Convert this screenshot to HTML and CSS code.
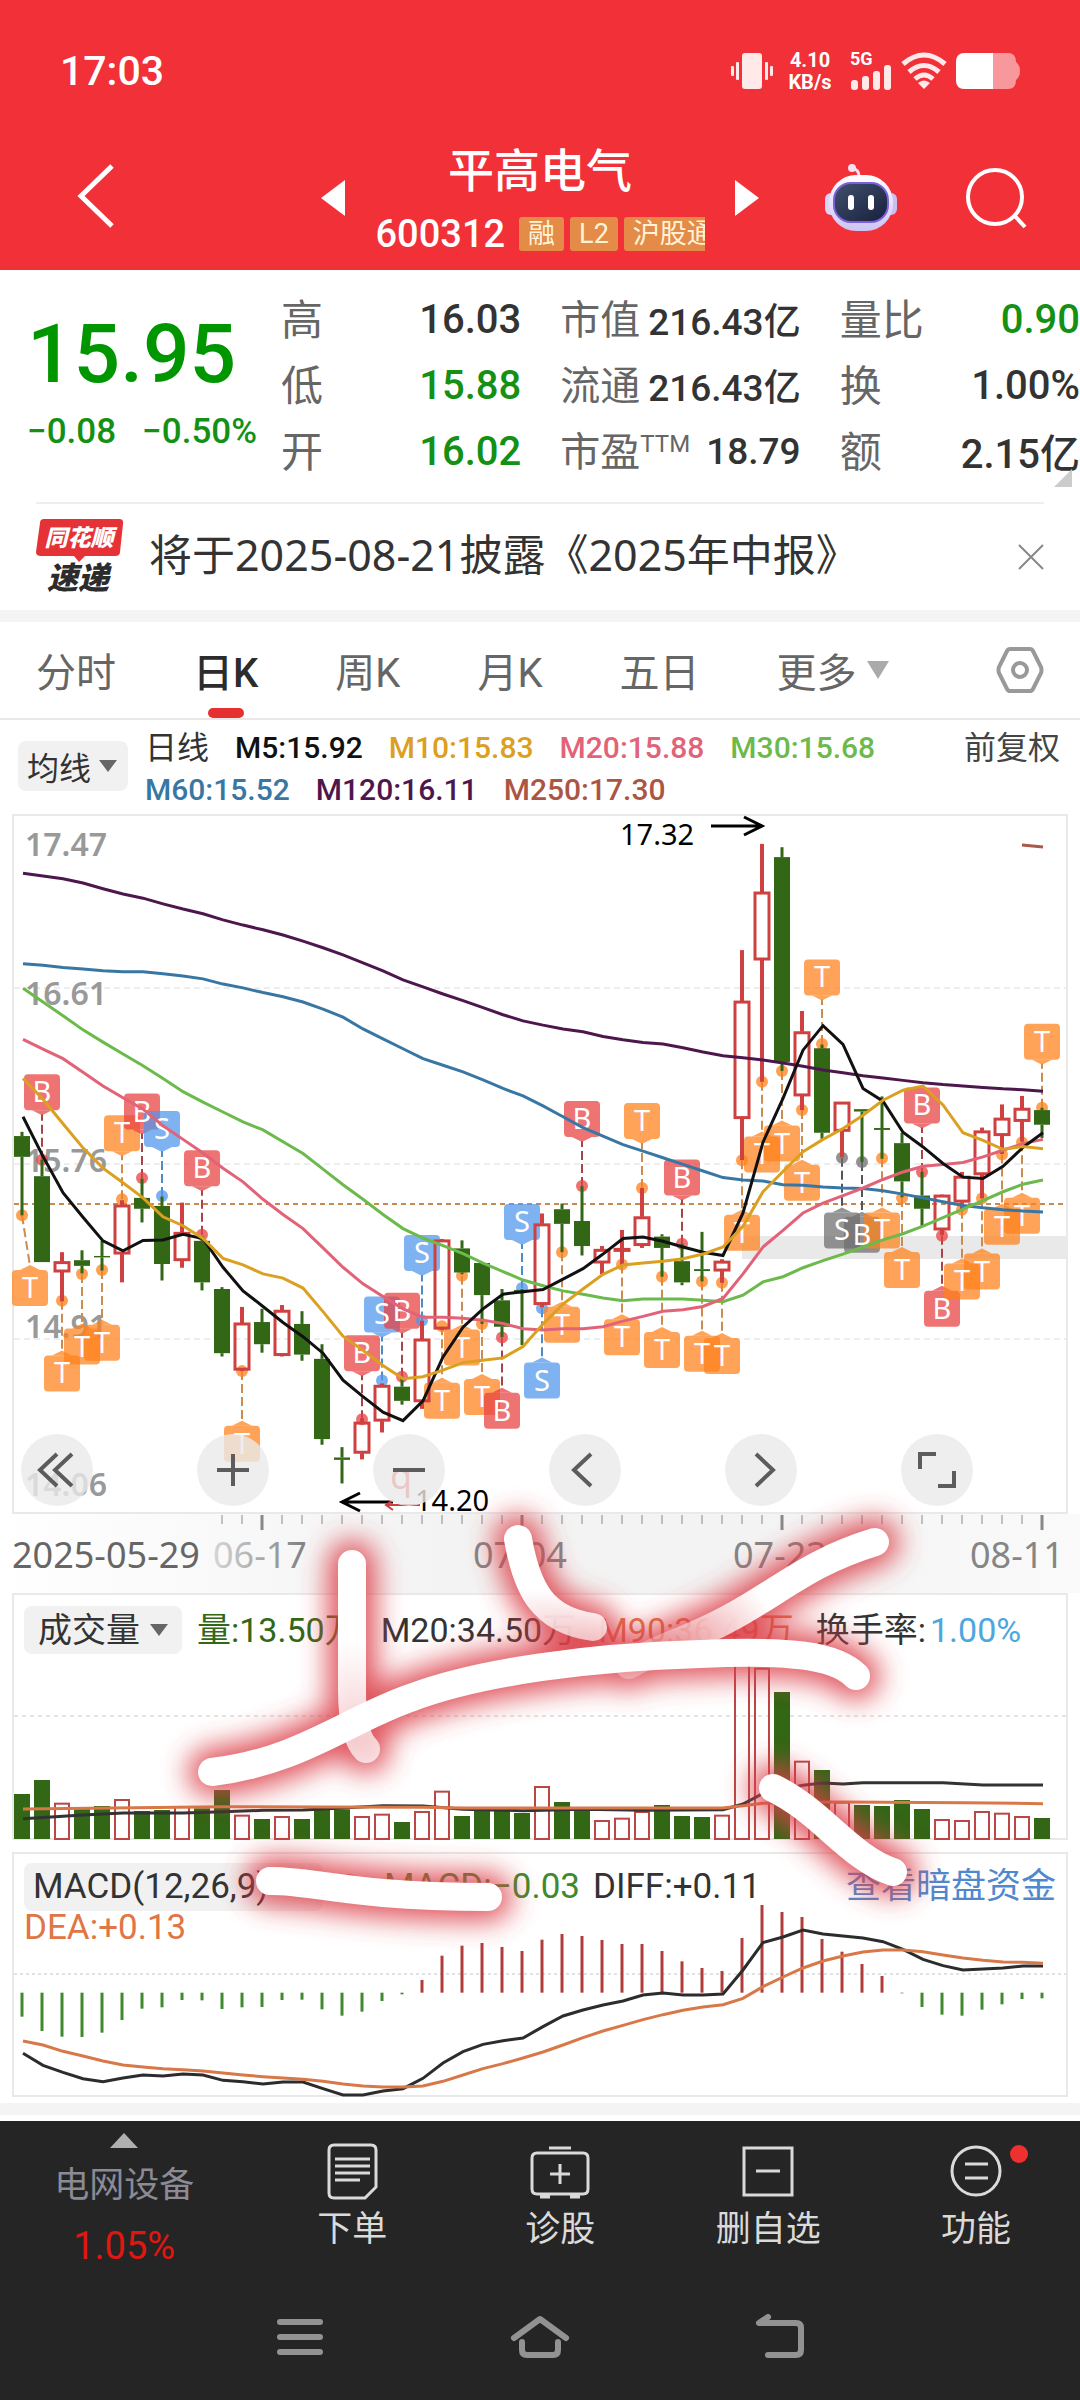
FILE: index.html
```html
<!DOCTYPE html>
<html lang="zh-CN">
<head>
<meta charset="utf-8">
<meta name="viewport" content="width=device-width">
<title>平高电气 600312</title>
<link rel="stylesheet" href="styles.css">
</head>
<body>
<header class="header">
  <div class="status">
    <span class="clock">17:03</span>
    <svg class="status-vibrate" width="42" height="38" viewBox="0 0 42 38" fill="#ffe9e9"><rect x="11" y="1" width="20" height="36" rx="3"/><rect x="5" y="10" width="3" height="18" rx="1"/><rect x="0" y="14" width="3" height="10" rx="1"/><rect x="34" y="10" width="3" height="18" rx="1"/><rect x="39" y="14" width="3" height="10" rx="1"/></svg>
    <span class="speed">4.10<br>KB/s</span>
    <span class="signal"><b>5G</b><svg width="42" height="26" viewBox="0 0 42 26" fill="#ffe9e9"><rect x="1" y="16" width="7" height="10" rx="3"/><rect x="12" y="12" width="7" height="14" rx="3"/><rect x="23" y="7" width="7" height="19" rx="3"/><rect x="34" y="1" width="7" height="25" rx="3"/></svg></span>
    <svg class="wifi" width="46" height="38" viewBox="0 0 46 38" fill="none" stroke="#ffe9e9" stroke-width="5"><path d="M2 12Q23 -6 44 12M8 20Q23 7 38 20M14 27Q23 19 32 27"/><path d="M17 31Q23 26 29 31L23 37Z" fill="#ffe9e9" stroke="none"/></svg>
    <svg class="battery" width="64" height="36" viewBox="0 0 64 36"><path d="M9 0H52Q60 0 60 9Q64 12 64 18T60 27Q60 36 52 36H9Q0 36 0 27V9Q0 0 9 0Z" fill="#f9989c"/><path d="M9 0H37V36H9Q0 36 0 27V9Q0 0 9 0Z" fill="#fff"/></svg>
  </div>
  <div class="titlebar">
    <button class="back" aria-label="返回"><svg width="38" height="64" viewBox="0 0 38 64" fill="none" stroke="#fff" stroke-width="5"><path d="M35 2L4 32L35 62"/></svg></button>
    <button class="step" aria-label="上一只"><svg width="24" height="36" viewBox="0 0 24 36"><path d="M24 0V36L0 18Z" fill="#fff"/></svg></button>
    <div class="title">
      <h1>平高电气</h1>
      <div class="code"><span class="code-num">600312</span><span class="tag">融</span><span class="tag">L2</span><span class="tag">沪股通</span></div>
    </div>
    <button class="step" aria-label="下一只"><svg width="24" height="36" viewBox="0 0 24 36"><path d="M0 0V36L24 18Z" fill="#fff"/></svg></button>
    <button class="robot" aria-label="智能助手"><svg width="72" height="68" viewBox="0 0 72 68"><defs><linearGradient id="shell" x1="0" y1="0" x2="0" y2="1"><stop offset="0" stop-color="#fff"/><stop offset="1" stop-color="#cdc3f3"/></linearGradient><linearGradient id="face" x1="0" y1="0" x2="1" y2="1"><stop offset="0" stop-color="#41516d"/><stop offset="1" stop-color="#171f3c"/></linearGradient></defs><path d="M34 12Q34 5 26 4" fill="none" stroke="#f6dff0" stroke-width="3"/><circle cx="27" cy="4" r="4" fill="#f6dff0"/><rect x="0" y="29" width="12" height="22" rx="6" fill="#dcd4f8"/><rect x="60" y="29" width="12" height="22" rx="6" fill="#c9bff0"/><rect x="4" y="11" width="64" height="56" rx="27" fill="url(#shell)"/><rect x="9" y="19" width="54" height="39" rx="17" fill="url(#face)" stroke="#7a5fdc" stroke-width="2"/><rect x="23" y="31" width="6" height="15" rx="3" fill="#fff"/><rect x="43" y="31" width="6" height="15" rx="3" fill="#fff"/></svg></button>
    <button class="search" aria-label="搜索"><svg width="62" height="62" viewBox="0 0 62 62" fill="none" stroke="#fff" stroke-width="4"><circle cx="30" cy="29" r="27"/><path d="M49 47L60 59"/></svg></button>
  </div>
</header>

<main>
<section class="quote">
  <div class="last">
    <div class="price">15.95</div>
    <div class="change"><span>−0.08</span><span>−0.50%</span></div>
  </div>
  <dl class="facts">
    <div class="f-a"><dt>高</dt><dd>16.03</dd></div>
    <div class="f-b"><dt>市值</dt><dd>216.43亿</dd></div>
    <div class="f-c"><dt>量比</dt><dd class="down">0.90</dd></div>
    <div class="f-a"><dt>低</dt><dd class="down">15.88</dd></div>
    <div class="f-b"><dt>流通</dt><dd>216.43亿</dd></div>
    <div class="f-c"><dt>换</dt><dd>1.00%</dd></div>
    <div class="f-a"><dt>开</dt><dd class="down">16.02</dd></div>
    <div class="f-b"><dt>市盈<sup>TTM</sup></dt><dd>18.79</dd></div>
    <div class="f-c"><dt>额</dt><dd>2.15亿</dd></div>
  </dl>
  <svg class="corner" width="18" height="18" viewBox="0 0 18 18"><path d="M18 0V18H0Z" fill="#ccc"/></svg>
</section>

<section class="news">
  <svg class="badge" width="88" height="76" viewBox="0 0 88 76"><path d="M8 0H83Q88 0 87 5L84 33Q84 37 79 37H49L43 43L38 37H5Q0 37 0 33L4 4Q4 0 8 0Z" fill="#e43236"/><text x="43" y="27" class="badge-top">同花顺</text><text x="42" y="70" class="badge-bottom">速递</text></svg>
  <a class="news-text" href="#">将于2025-08-21披露《2025年中报》</a>
  <button class="close" aria-label="关闭"><svg width="26" height="26" viewBox="0 0 26 26" stroke="#888" stroke-width="2"><path d="M1 1L25 25M25 1L1 25"/></svg></button>
</section>

<nav class="tabs">
  <button>分时</button><button class="active">日K</button><button>周K</button><button>月K</button><button>五日</button>
  <button class="more">更多<svg width="22" height="18" viewBox="0 0 22 18"><path d="M0 0H22L11 18Z" fill="#aaa"/></svg></button>
  <button class="gear" aria-label="设置"><svg width="48" height="46" viewBox="0 0 48 46" fill="none" stroke="#999" stroke-width="4"><path d="M14 2H34Q36 2 37 4L45 20Q46 23 45 26L37 42Q36 44 34 44H14Q12 44 11 42L3 26Q2 23 3 20L11 4Q12 2 14 2Z"/><circle cx="24" cy="23" r="7"/></svg></button>
</nav>

<section class="ma">
  <button class="picker">均线<svg width="18" height="12" viewBox="0 0 18 12"><path d="M0 0H18L9 12Z" fill="#666"/></svg></button>
  <div class="ma-list">
    <div class="ma-row"><span class="period">日线</span><span class="m5">M5:15.92</span><span class="m10">M10:15.83</span><span class="m20">M20:15.88</span><span class="m30">M30:15.68</span></div>
    <div class="ma-row"><span class="m60">M60:15.52</span><span class="m120">M120:16.11</span><span class="m250">M250:17.30</span></div>
  </div>
  <button class="adjust">前复权</button>
</section>

<section class="charts">
  <div class="panels">
    <div class="panel">
      <svg id="price" viewBox="0 814 1080 700"></svg>
      <div class="controls">
        <button aria-label="最早"><svg viewBox="0 0 72 72"><path d="M36 20L19 36L36 52M51 20L34 36L51 52"/></svg></button>
        <button aria-label="放大"><svg viewBox="0 0 72 72"><path d="M20 36H52M36 20V52"/></svg></button>
        <button aria-label="缩小"><svg viewBox="0 0 72 72"><path d="M20 36H52"/></svg></button>
        <button aria-label="左移"><svg viewBox="0 0 72 72"><path d="M42 20L25 36L42 52"/></svg></button>
        <button aria-label="右移"><svg viewBox="0 0 72 72"><path d="M31 20L48 36L31 52"/></svg></button>
        <button aria-label="全屏"><svg viewBox="0 0 72 72"><path d="M19 35V20H35M37 52H53V37"/></svg></button>
      </div>
    </div>
    <svg id="axis" class="axis" viewBox="0 1514 1080 79"></svg>
    <div class="panel volume">
      <svg id="volume" viewBox="0 1593 1080 250"></svg>
      <div class="legend">
        <button class="picker">成交量<svg width="18" height="12" viewBox="0 0 18 12"><path d="M0 0H18L9 12Z" fill="#666"/></svg></button>
        <span class="vol-now">量:13.50万</span><span>M20:34.50万</span><span class="orange">M90:36.49万</span><span>换手率:<span class="turnover">1.00%</span></span>
      </div>
    </div>
    <div class="panel macd">
      <svg id="macd" viewBox="0 1852 1080 246"></svg>
      <div class="legend">
        <button class="picker wide">MACD(12,26,9)<svg width="18" height="12" viewBox="0 0 18 12"><path d="M0 0H18L9 12Z" fill="#666"/></svg></button>
        <svg class="help" width="26" height="26" viewBox="0 0 26 26" fill="none" stroke="#b9a9a9" stroke-width="2"><circle cx="13" cy="13" r="12"/></svg>
        <span class="hist">MACD:−0.03</span><span>DIFF:+0.11</span><a class="dark-pool" href="#">查看暗盘资金</a>
        <span class="orange dea">DEA:+0.13</span>
      </div>
    </div>
  </div>
  <svg class="ink" viewBox="0 814 1080 1284" fill="none" stroke-linecap="round" aria-hidden="true">
    <defs>
      <filter id="glow" filterUnits="userSpaceOnUse" x="0" y="1400" width="1080" height="660"><feGaussianBlur stdDeviation="14"/></filter>
      <linearGradient id="fadeDown" gradientUnits="userSpaceOnUse" x1="0" y1="1640" x2="0" y2="1740"><stop offset="0" stop-color="#fff"/><stop offset="1" stop-color="#fff" stop-opacity=".7"/></linearGradient>
      <linearGradient id="fadeHook" gradientUnits="userSpaceOnUse" x1="0" y1="1590" x2="0" y2="1645"><stop offset="0" stop-color="#fff"/><stop offset="1" stop-color="#fff" stop-opacity=".6"/></linearGradient>
      <linearGradient id="fadeLeft" gradientUnits="userSpaceOnUse" x1="760" y1="1595" x2="670" y2="1655"><stop offset="0" stop-color="#fff"/><stop offset="1" stop-color="#fff" stop-opacity=".3"/></linearGradient>
    </defs>
    <g class="ink-glow" filter="url(#glow)">
      <path d="M352 1564V1690Q352 1735 366 1749"/><path d="M518 1539C527 1590 543 1620 593 1627"/><path d="M875 1542C790 1568 770 1606 678 1642Q640 1658 629 1665"/><path d="M773 1788C820 1810 850 1858 893 1872"/><path d="M270 1881C310 1880 350 1897 488 1897"/><path d="M212 1772C300 1762 350 1718 413 1697C480 1672 590 1657 700 1654C790 1650 835 1655 856 1676"/>
    </g>
    <g stroke-width="28">
      <path d="M352 1564V1690Q352 1735 366 1749" stroke="url(#fadeDown)"/>
      <path d="M518 1539C527 1590 543 1620 593 1627" stroke="url(#fadeHook)"/>
      <path d="M875 1542C790 1568 770 1606 678 1642Q640 1658 629 1665" stroke="url(#fadeLeft)"/>
      <path d="M773 1788C820 1810 850 1858 893 1872M270 1881C310 1880 350 1897 488 1897M212 1772C300 1762 350 1718 413 1697C480 1672 590 1657 700 1654C790 1650 835 1655 856 1676" stroke="#fff"/>
    </g>
  </svg>
</section>
</main>

<footer class="footer">
  <nav class="actions">
    <button class="sector"><svg width="28" height="15" viewBox="0 0 28 15"><path d="M14 0L28 15H0Z" fill="#b0b0b0"/></svg><span class="sector-name">电网设备</span><span class="sector-rate">1.05%</span></button>
    <button><svg width="60" height="60" viewBox="0 0 60 60"><path d="M12 4H49Q54 4 54 9V46L43 57H12Q7 57 7 52V9Q7 4 12 4Z"/><path d="M13 18H48M13 25H48M13 32H48M13 39H38"/></svg><span>下单</span></button>
    <button><svg width="60" height="60" viewBox="0 0 60 60"><path d="M19 7H41M7 12H53Q58 12 58 17V48Q58 53 53 53H7Q2 53 2 48V17Q2 12 7 12ZM20 33H40M30 23V43M10 56H20M40 56H50"/></svg><span>诊股</span></button>
    <button><svg width="60" height="60" viewBox="0 0 60 60"><path d="M6 7H54V54H6ZM18 30H42"/></svg><span>删自选</span></button>
    <button class="func"><svg width="60" height="60" viewBox="0 0 60 60"><circle cx="30" cy="30" r="24"/><path d="M19 23H42M19 37H42"/></svg><i class="dot"></i><span>功能</span></button>
  </nav>
  <nav class="system">
    <button aria-label="最近任务"><svg width="60" height="48" viewBox="0 0 60 48"><path d="M10 8H50M10 23H50M10 38H50"/></svg></button>
    <button aria-label="主屏幕"><svg width="60" height="48" viewBox="0 0 60 48"><path d="M4 24L30 5L56 24M12 28V36Q12 41 17 41H43Q48 41 48 36V28"/></svg></button>
    <button aria-label="返回上一级"><svg width="60" height="48" viewBox="0 0 60 48"><path d="M18 3L9 9H46Q51 9 51 14V36Q51 41 46 41H18"/></svg></button>
  </nav>
</footer>
<script src="chart.js"></script>
</body>
</html>
```
FILE: styles.css
```css
* { box-sizing: border-box; }
body { margin: 0; background: #fff; color: #333; font-family: Roboto, "Noto Sans CJK SC", sans-serif; overflow-x: hidden; }
button { padding: 0; border: 0; background: none; color: inherit; font: inherit; white-space: nowrap; }
a { color: inherit; text-decoration: none; }
svg { display: block; flex: none; }
h1, dl, dd { margin: 0; }

.header { background: #f13038; color: #fff; }
.status { display: flex; align-items: center; height: 142px; padding: 0 60px; }
.clock { font-size: 41px; font-weight: 500; flex: 1; }
.speed { margin-left: 13px; width: 48px; font-size: 20px; line-height: 22px; font-weight: 700; text-align: center; }
.signal { margin-left: 16px; font-size: 18px; line-height: 14px; }
.signal b { display: block; height: 12px; }
.wifi { margin-left: 9px; }
.battery { margin-left: 9px; }
.titlebar { display: flex; height: 128px; padding: 22px 53px 0 77px; align-items: flex-start; }
.back { flex: none; width: 244px; }
.step { margin-top: 16px; }
.title { flex: 1; margin-top: -22px; display: flex; flex-direction: column; align-items: center; gap: 12px; }
.title h1 { font-size: 46px; line-height: 58px; font-weight: 500; }
.code { display: flex; align-items: center; width: 329px; height: 44px; overflow: hidden; }
.code-num { font-size: 38px; font-weight: 500; margin-right: 8px; }
.tag { flex: none; margin-left: 6px; padding: 0 9px; height: 34px; line-height: 34px; font-size: 27px; background: #e48b48; color: #fff3d8; border-radius: 3px; }
.robot { margin-left: 66px; }
.search { margin-left: 68px; margin-top: 4px; }

.quote { position: relative; display: flex; height: 232px; }
.last { flex: none; width: 281px; padding: 36px 0 0 27px; color: #009600; font-weight: 500; }
.price { font-size: 82px; line-height: 96px; }
.change { display: flex; gap: 26px; margin-top: 8px; font-size: 35px; line-height: 44px; color: #149014; }
.facts { flex: 1; display: grid; grid-template-columns: repeat(3, minmax(0, 1fr)); column-gap: 39px; grid-auto-rows: 66px; padding-top: 16px; }
.facts div { display: flex; justify-content: space-between; align-items: center; white-space: nowrap; }
.facts dt { padding-bottom: 5px; color: #666; font-size: 42px; }
.facts dd { font-size: 40px; font-weight: 500; }
.facts .f-b dt { font-size: 40px; }
.facts .f-b dd { font-size: 37px; }
.facts sup { font-size: 24px; line-height: 24px; vertical-align: 14px; }
.facts .down { color: #149014; }
.corner { position: absolute; right: 8px; bottom: 15px; }

.news { display: flex; align-items: center; height: 108px; margin: 0 36px; border-top: 2px solid #eee; }
.badge-top, .badge-bottom { font-weight: 900; font-style: italic; text-anchor: middle; }
.badge-top { font-size: 23px; fill: #fff; }
.badge-bottom { font-size: 31px; fill: #2c2c2c; }
.news-text { flex: 1; margin-left: 25px; padding-bottom: 5px; font-family: "Noto Sans", "Noto Sans CJK SC", sans-serif; font-size: 43px; line-height: 60px; }

.tabs { display: flex; gap: 77px; height: 110px; padding: 0 36px; border-top: 12px solid #f4f4f4; border-bottom: 2px solid #e8e8e8; font-size: 40px; color: #666; }
.tabs .active { position: relative; color: #2c2c2c; font-weight: 500; }
.tabs .active::after { content: ""; position: absolute; left: 50%; bottom: 0; width: 36px; height: 10px; margin-left: -18px; border-radius: 5px; background: #e6302f; }
.tabs .more { display: flex; align-items: center; gap: 10px; }
.tabs .gear { margin-left: auto; }

.ma { display: flex; align-items: flex-start; height: 94px; padding: 7px 20px 0 18px; font-size: 30px; font-weight: 500; }
.picker { display: flex; align-items: center; justify-content: center; gap: 8px; height: 50px; padding: 0 11px 0 9px; border-radius: 8px; background: #f1f1f1; color: #333; font-size: 32px; font-weight: 400; }
.ma .picker { margin-top: 14px; }
.ma-list { flex: 1; margin-left: 17px; line-height: 42px; }
.ma-row { display: flex; gap: 26px; height: 42px; }
.period, .adjust { font-size: 32px; font-weight: 400; }
.adjust { line-height: 42px; color: #444; }
.m5 { color: #111; }
.m10 { color: #dba020; }
.m20 { color: #e26378; }
.m30 { color: #6bba4b; }
.m60 { color: #3877a4; }
.m120 { color: #4d174e; }
.m250 { color: #ab5543; }

.charts, .panel { display: grid; grid-template-columns: minmax(0, 1fr); }
.charts > *, .panel > * { grid-area: 1 / 1; }
.panel > svg, .axis, .ink { width: 100%; height: auto; }
.ink { pointer-events: none; }
.ink-glow { stroke: #dc4048; stroke-width: 48px; opacity: .9; }
.controls { align-self: end; display: flex; justify-content: space-between; padding: 0 107px 8px 21px; }
.controls button { width: 72px; height: 72px; border-radius: 50%; background: rgba(234, 234, 234, .8); }
.controls path { fill: none; stroke: #5c5c5c; stroke-width: 4px; }
.axis { background: linear-gradient(90deg, #fff, #f3f3f3 40%, #f3f3f3 70%, #fafafa); }
.legend { align-self: start; display: flex; align-items: center; gap: 0 22px; padding: 13px 24px 0; font-size: 34px; line-height: 34px; white-space: nowrap; }
.legend .picker { height: 48px; padding: 0 14px; font-size: 34px; gap: 10px; }
.volume .legend .picker { margin-right: -7px; }
.macd { margin-top: 9px; }
.macd .legend { flex-wrap: wrap; gap: 0 13px; padding: 11px 24px 0; font-size: 35px; }
.macd .legend .wide { width: 299px; padding-left: 9px; justify-content: flex-start; font-size: 35px; }
.hist { margin-left: 9px; color: #3f8a2e; }
.vol-now { color: #316815; }
.orange { color: #e07545; }
.turnover { margin-left: 4px; color: #4ea6de; }
.dark-pool { margin-left: auto; color: #4f88cd; }
.dea { flex-basis: 100%; }

.footer { margin-top: 5px; border-top: 12px solid #f4f4f4; }
.actions { display: flex; height: 165px; border-top: 6px solid #fff; background: #252525; color: #dadada; font-size: 35px; line-height: 44px; }
.actions button { flex: 1; display: flex; flex-direction: column; align-items: center; padding-top: 20px; gap: 7px; }
.actions svg { fill: none; stroke: #dadada; stroke-width: 3px; }
.actions .sector { flex: 0 0 23%; padding-top: 12px; gap: 16px; }
.sector svg { stroke: none; }
.sector-name { color: #8b8b95; }
.sector-rate { font-size: 38px; font-weight: 400; color: #e01710; }
.func { position: relative; }
.dot { position: absolute; left: 50%; top: 24px; width: 18px; height: 18px; margin-left: 34px; border-radius: 50%; background: #ee3030; }
.system { display: flex; justify-content: center; gap: 180px; height: 120px; padding-top: 34px; align-items: flex-start; background: #252525; }
.system svg { fill: none; stroke: #929292; stroke-width: 6px; stroke-linecap: round; stroke-linejoin: round; }

.axis-price { font: 600 32px "Noto Sans", sans-serif; fill: #999; }
.extreme { font: 400 29px "Noto Sans", sans-serif; fill: #000; }
.date { font: 400 36px "Noto Sans", sans-serif; fill: #858585; }
.mark { font: 400 29px "Noto Sans", sans-serif; fill: #fff; text-anchor: middle; }
.event { font: 400 36px "Noto Sans", sans-serif; fill: #e0453f; }
```
FILE: chart.js
```js
const STEP = 20, FIRST = 22;
const RED = '#cf4040', GREEN = '#316715';
const X = i => FIRST + i * STEP;
const Y = v => 800 + v * 0.472;

// [colour, high, body top, body bottom, low]
const candles = [
  'g,703,712,756,880','g,762,797,979,979','r,958,978,1000,1062','g,954,975,987,1003','g,934,966,969,997','r,848,858,962,1022','g,802,843,866,895','g,840,860,983,1018','r,853,916,976,991','g,924,934,1022,1039',
  'g,1032,1036,1172,1179','r,1074,1108,1208,1210','g,1078,1106,1153,1171','r,1070,1081,1177,1179','g,1083,1110,1175,1188','g,1153,1184,1354,1366','g,1371,1393,1398,1448','r,1310,1318,1384,1397','r,1236,1240,1316,1340','g,1222,1243,1273,1281',
  'r,1103,1142,1275,1290','r,930,932,1121,1123','g,933,950,1001,1005','g,981,981,1049,1110','g,1036,1060,1116,1138','g,1036,1038,1042,1155','r,876,898,1069,1075','g,855,867,898,958','g,818,892,945,965','r,945,952,981,1005',
  'r,911,950,953,985','r,822,883,944,949','g,920,925,949,1010','g,940,977,1022,1028','g,915,994,998,1020','r,973,977,998,1023','r,318,426,675,763','r,93,195,339,597','g,100,121,555,574','r,447,491,627,657',
  'g,518,526,705,718','r,640,640,702,757','g,655,655,660,767','g,628,695,699,760','g,705,727,808,842','g,788,838,866,905','r,836,837,911,922','r,788,797,852,868','r,694,701,794,844','r,645,674,711,750',
  'r,627,653,681,724','g,652,657,688,716'
].map(s => s.split(',').map((v, k) => k ? +v : v));

const averages = {
  '#4d174e': [155,161,167,176,188,199,208,220,231,241,254,265,275,286,299,313,328,345,362,381,396,411,425,440,455,468,477,485,491,501,508,514,517,525,534,542,546,551,557,564,572,578,584,589,594,599,603,606,609,612,614,617],
  '#3877a4': [347,350,355,358,362,364,364,368,373,379,390,398,408,417,428,443,460,485,506,527,548,562,576,593,611,627,648,671,694,712,730,744,758,772,786,800,805,807,815,816,820,822,823,828,835,843,851,859,864,868,871,873],
  '#6bba4b': [399,428,457,487,513,538,563,590,618,640,661,682,699,724,749,782,815,846,878,908,928,944,961,981,999,1017,1029,1040,1047,1055,1061,1057,1057,1057,1060,1063,1049,1021,1010,991,976,962,947,932,919,903,885,867,849,830,814,805],
  '#e26378': [507,528,548,577,606,631,655,690,719,748,780,809,846,878,908,949,990,1025,1052,1078,1096,1096,1098,1102,1109,1120,1123,1120,1120,1116,1104,1094,1083,1080,1073,1056,1004,947,912,875,854,838,822,804,788,776,772,768,756,742,728,719],
  '#111111': [671,755,832,884,934,955,933,932,920,929,990,1040,1073,1107,1137,1172,1229,1264,1297,1315,1273,1180,1117,1078,1047,1042,1037,1015,993,962,929,926,935,947,958,965,875,725,632,530,478,518,611,638,704,735,770,799,802,776,736,705],
  '#dba020': [590,634,686,737,780,811,843,883,902,929,971,985,1004,1013,1034,1084,1136,1166,1198,1226,1222,1208,1192,1187,1182,1158,1110,1068,1036,1005,985,981,977,972,962,947,903,830,787,745,719,696,668,636,615,606,646,705,721,740,734,739]
};

// [index, letter, label centre, anchor]; lower case letters are closed trades
const marks = [
  [0,'T',1034,880],[1,'B',619,762],[2,'T',1215,1061],[3,'T',1158,1004],[4,'T',1150,996],[5,'T',706,846],[6,'B',660,801],[7,'S',697,839],[9,'B',780,921],[11,'T',1364,1210],
  [17,'B',1172,1312],[18,'S',1090,1230],[19,'B',1082,1222],[20,'S',960,1103],[21,'T',1273,1115],[22,'T',1160,1008],[23,'T',1265,1110],[24,'B',1294,1139],[25,'S',894,1034],[26,'S',1230,1077],
  [27,'T',1112,958],[28,'B',676,818],[30,'T',1138,984],[31,'T',680,822],[32,'T',1165,1010],[33,'B',800,940],[34,'T',1173,1020],[35,'T',1178,1023],[36,'T',917,763],[37,'T',751,597],
  [38,'T',728,574],[39,'T',811,657],[40,'T',376,517],[41,'s',912,758],[42,'b',921,767],[43,'T',912,759],[44,'T',996,843],[45,'B',647,788],[46,'B',1078,923],[47,'T',1020,868],
  [48,'T',999,844],[49,'T',904,751],[50,'T',881,725],[51,'T',512,652]
];
const tone = {
  T: ['#ff811b', '#cc8c50'], B: ['#e84040', '#a84448'], S: ['#5096eb', '#4d8cc4'],
  s: ['#6e6e6e', '#555'], b: ['#6e6e6e', '#555']
};

const line = (pts, color, w = 3) => `<polyline points="${pts.map(p => p.join()).join(' ')}" fill="none" stroke="${color}" stroke-width="${w}"/>`;
const seg = (x1, y1, x2, y2, color, w, dash = '') => `<line x1="${x1}" y1="${y1}" x2="${x2}" y2="${y2}" stroke="${color}" stroke-width="${w}" stroke-dasharray="${dash}"/>`;
const frame = (y, h) => `<rect x="13" y="${y}" width="1054" height="${h}" fill="none" stroke="#e9e9e9" stroke-width="2"/>`;
const text = (x, y, cls, s) => `<text x="${x}" y="${y}" class="${cls}">${s}</text>`;

function drawPrice() {
  let out = frame(815, 698);
  [988, 1164, 1339].forEach(y => out += seg(14, y, 1066, y, '#dcdcdc', 1, '6 4'));
  out += `<rect x="742" y="1236" width="325" height="23" fill="#e9e9e9"/>`;
  out += seg(14, 1204, 1066, 1204, '#c98a50', 2, '5 4');
  [['17.47', 856], ['16.61', 1005], ['15.76', 1172], ['14.91', 1338], ['14.06', 1496]].forEach(([s, y]) => out += text(25, y, 'axis-price', s));
  marks.forEach(([i, k, c, a]) => {
    const x = X(i), bx = i ? x : 30, y = Y(c), ay = Y(a), dir = a > c ? 1 : -1, [fill, stem] = tone[k];
    out += seg(x, ay, bx, y + dir * 22, stem, 2, '9 4');
    out += `<circle cx="${x}" cy="${ay}" r="6" fill="${fill}" fill-opacity=".75"/>`;
    out += `<g fill="${fill}" fill-opacity=".73"><rect x="${bx - 18}" y="${y - 18}" width="36" height="36" rx="4"/><path d="M${bx - 10} ${y + dir * 18}h20l-10 ${dir * 5}z"/></g>`;
  });
  candles.forEach(([k, h, t, b, l], i) => {
    const x = X(i), color = k === 'r' ? RED : GREEN, w = k === 'r' ? 4 : 3;
    out += seg(x, Y(h), x, Y(t), color, w) + seg(x, Y(b), x, Y(l), color, w);
    out += k === 'r'
      ? `<rect x="${x - 7}" y="${Y(t) + 1}" width="14" height="${Math.max(1, Y(b) - Y(t) - 2)}" fill="none" stroke="${color}" stroke-width="3"/>`
      : `<rect x="${x - 8}" y="${Y(t)}" width="16" height="${Y(b) - Y(t)}" fill="${color}"/>`;
  });
  marks.forEach(([i, k, c]) => out += text(i ? X(i) : 30, Y(c) + 10, 'mark', k.toUpperCase()));
  for (const color in averages) out += line(averages[color].map((v, i) => [X(i) + 1, Y(v)]), color);
  out += seg(1022, 845, 1043, 847, '#a85a4a', 3);
  out += text(620, 845, 'extreme', '17.32') + `<path d="M711 826H761M744 817L762 826L744 835" fill="none" stroke="#000" stroke-width="3"/>`;
  out += text(415, 1511, 'extreme', '14.20') + `<path d="M393 1502H342M360 1493L342 1502L360 1511" fill="none" stroke="#000" stroke-width="3"/>`;
  out += text(390, 1489, 'event', 'q') + `<path d="M420 1505H386M393 1500L386 1505L393 1510" fill="none" stroke="#d33c3c" stroke-width="2"/>`;
  document.getElementById('price').innerHTML = out;
}

function drawAxis() {
  let out = `<defs><linearGradient id="dateFade" gradientUnits="userSpaceOnUse" x1="205" x2="300" y1="0" y2="0"><stop offset="0" stop-color="#ddd"/><stop offset="1" stop-color="#858585"/></linearGradient></defs>`;
  for (let i = 10; i < 52; i++) {
    const major = (i - 12) % 13 === 0;
    out += seg(X(i), 1515, X(i), major ? 1530 : 1524, '#888', major ? 3 : 1);
  }
  out += `<text x="12" y="1568" class="date" style="fill:#666">2025-05-29</text><text x="213" y="1568" class="date" style="fill:url(#dateFade)">06-17</text>`;
  out += text(473, 1568, 'date', '07-04') + text(733, 1568, 'date', '07-23') + text(970, 1568, 'date', '08-11');
  document.getElementById('axis').innerHTML = out;
}

function drawVolume() {
  const tops = [882,840,908,925,918,897,933,930,918,925,870,944,957,948,957,930,928,948,941,966,933,872,948,930,930,939,858,906,925,960,953,933,915,948,951,944,460,503,576,782,810,905,915,918,900,927,957,960,933,938,948,954];
  const y = v => 1500 + v / 3;
  let out = frame(1594, 245) + seg(14, 1716, 1066, 1716, '#e4e4e4', 2, '4 4');
  tops.forEach((t, i) => {
    const x = X(i);
    out += candles[i][0] === 'r'
      ? `<rect x="${x - 7}" y="${y(t) + 1}" width="14" height="${1838 - y(t)}" fill="none" stroke="#bb4646" stroke-width="2"/>`
      : `<rect x="${x - 8}" y="${y(t)}" width="16" height="${1839 - y(t)}" fill="${GREEN}"/>`;
  });
  const m20 = [[0,956],[3,945],[5,939],[8,939],[10,935],[12,931],[14,930],[16,924],[18,917],[20,918],[22,928],[25,932],[28,928],[31,931],[35,929],[36,912],[37,880],[39,856],[40,849],[41,852],[42,848],[46,848],[48,855],[51,855]];
  const m90 = [[0,927],[10,920],[15,921],[20,922],[22,924],[35,924],[36,917],[37,910],[39,907],[41,906],[47,908],[51,911]];
  const pts = a => a.map(([i, v]) => [X(i) + 1, y(v)]);
  out += line(pts(m20), '#333') + line(pts(m90), '#d87848');
  document.getElementById('volume').innerHTML = out;
}

function drawMacd() {
  const hist = [530,573,590,591,578,540,506,502,480,481,507,502,501,480,479,508,527,515,483,463,420,347,317,309,321,333,299,282,288,300,312,312,333,364,384,393,294,195,216,231,297,335,372,408,460,501,524,527,509,493,477,475];
  const diff = [640,676,697,716,725,714,705,708,702,705,721,725,732,726,726,746,765,765,753,746,715,669,635,613,602,594,560,528,510,495,483,465,459,465,465,462,390,308,291,270,282,288,294,305,328,358,377,390,387,384,378,378];
  const dea = [603,615,634,648,663,675,681,686,689,693,699,705,710,714,718,724,732,738,741,741,738,724,705,686,671,654,636,615,593,573,556,539,524,511,501,494,475,440,411,384,363,348,336,330,330,335,345,354,361,366,367,370];
  const y = v => 1840 + v / 3;
  let out = frame(1853, 243) + seg(14, 1974, 1066, 1974, '#e2e2e2', 2, '3 3');
  hist.forEach((v, i) => out += seg(X(i), y(458), X(i), y(v), v > 458 ? '#3f8a2e' : '#b03c3c', 3));
  out += line(diff.map((v, i) => [X(i) + 1, y(v)]), '#2c2c2c') + line(dea.map((v, i) => [X(i) + 1, y(v)]), '#d87848');
  document.getElementById('macd').innerHTML = out;
}

drawPrice();
drawAxis();
drawVolume();
drawMacd();
```
